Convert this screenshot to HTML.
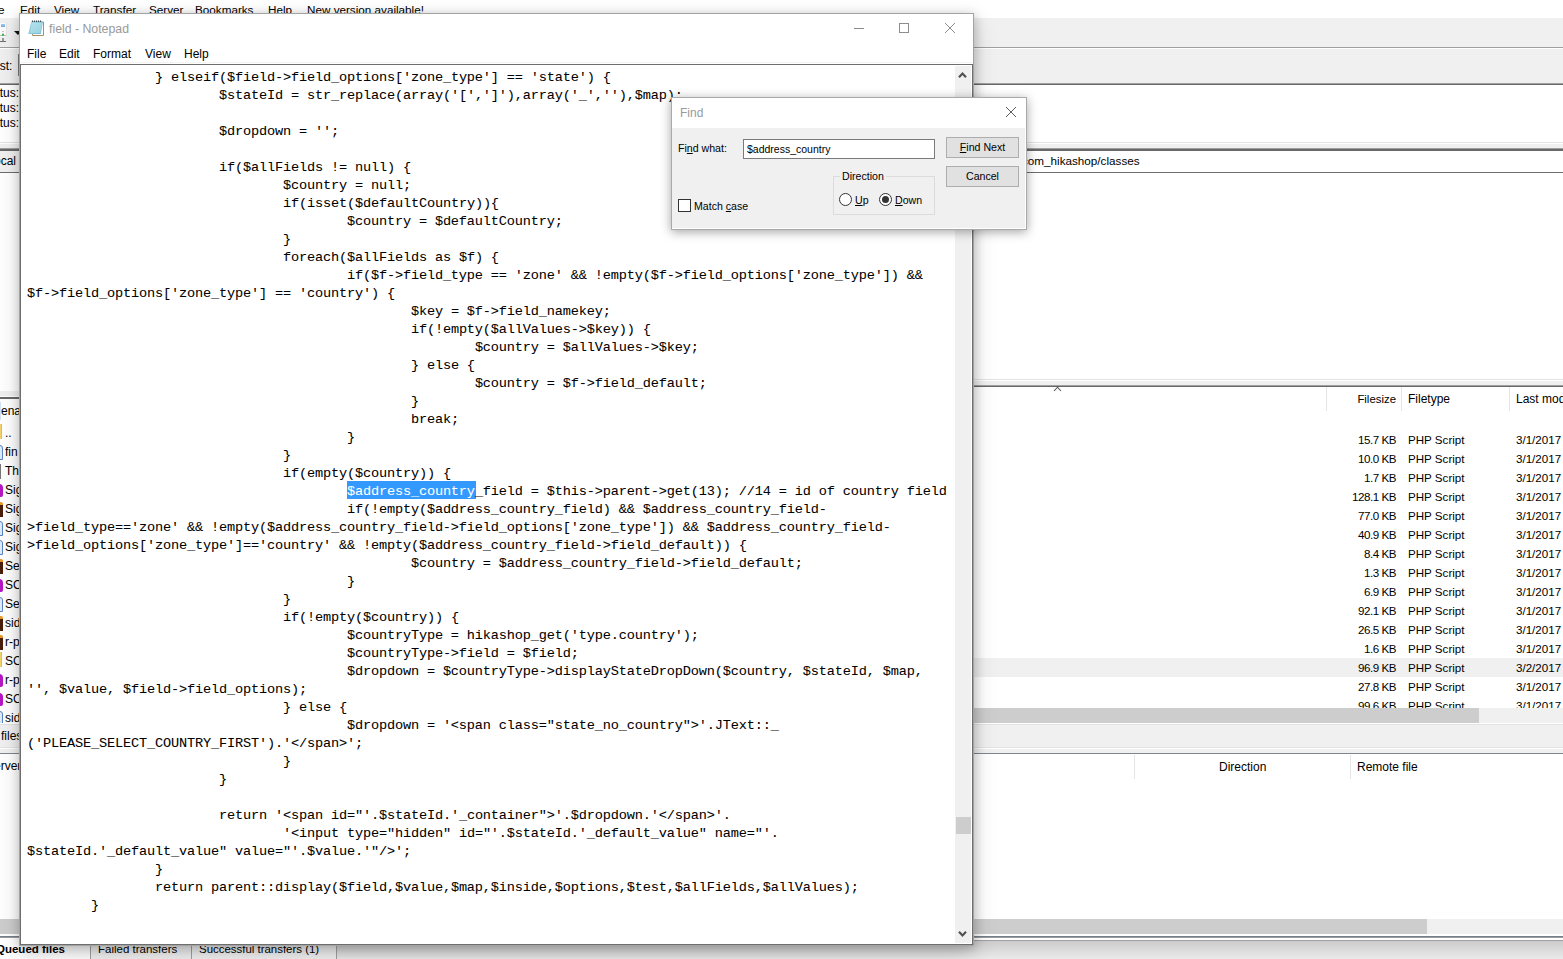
<!DOCTYPE html>
<html lang="en">
<head>
<meta charset="utf-8">
<title>field - Notepad</title>
<style>
html,body{margin:0;padding:0;}
body{width:1563px;height:959px;position:relative;overflow:hidden;background:#fff;
  font-family:"Liberation Sans",sans-serif;font-size:12px;color:#000;}
.abs{position:absolute;}
.t{position:absolute;white-space:pre;line-height:16px;height:16px;}
/* ---------- FileZilla background ---------- */
#fz{position:absolute;left:0;top:0;width:1563px;height:959px;background:#fff;}
.bar{position:absolute;left:0;width:1563px;}
.row{position:absolute;left:973px;width:590px;height:19px;line-height:19px;font-size:11.6px;}
.row.sel{background:#f0f0f0;}
.row span{position:absolute;top:0;white-space:pre;}
.row .sz{right:167px;text-align:right;letter-spacing:-0.45px;}
.row .ty{left:435px;}
.row .dt{left:543px;}
.lrow{position:absolute;left:0;width:20px;height:19px;line-height:19px;font-size:12px;overflow:hidden;}
.lrow span{position:absolute;left:5px;top:0;white-space:pre;}
.ic{position:absolute;left:-12px;top:2px;width:15px;height:15px;box-sizing:border-box;}
.ic.folder{background:#f3d36b;top:-1px;height:16px;left:-13px;border-right:1px solid #e5bd4a;}
.ic.doc{background:#dfeaf8;border:1px solid #5b84c4;border-radius:0 3px 0 0;}
.ic.txt{background:#fff;border:1px solid #777;left:-14px;}
.ic.php{background:#b517c4;border-radius:0 4px 2px 0;top:3px;height:13px;}
.ic.brown{background:#4a1f0a;border-top:3px solid #e79a2e;border-radius:0 2px 0 0;}
/* ---------- Notepad ---------- */
#np{z-index:5;position:absolute;left:19px;top:13px;width:955px;height:933px;box-sizing:border-box;background:#fff;
  border:1px solid #a3a3a3;box-shadow:1px 2px 10px rgba(0,0,0,.20),0 8px 22px rgba(0,0,0,.16);}
#np .title{position:absolute;left:29px;top:7px;font-size:12.3px;color:#999;line-height:16px;white-space:pre;}
#np .menu{position:absolute;top:32px;font-size:12px;line-height:16px;color:#000;white-space:pre;}
#np .mline{position:absolute;left:0;top:48px;width:953px;height:1px;background:#f4f4f4;}
#edit{position:absolute;left:0;top:50px;width:953px;height:881px;box-sizing:border-box;border:1px solid #6e6e6e;background:#fff;overflow:hidden;}
#hlbox{position:absolute;left:326px;top:416px;width:129px;height:18px;background:#3399ff;}
#code{position:absolute;left:6px;top:3.5px;margin:0;font-family:"Liberation Mono","DejaVu Sans Mono",monospace;font-size:13.6px;letter-spacing:-0.16px;line-height:18px;
  white-space:pre;tab-size:8;-moz-tab-size:8;color:#000;-webkit-text-stroke:0.06px #000;}
.hl{color:#fff;-webkit-text-stroke:0.06px #fff;}
#vsb{position:absolute;left:934px;top:1px;width:16px;height:877px;background:#f0f0f0;}
#vsb .thumb{position:absolute;left:0.5px;top:751px;width:15px;height:17px;background:#cdcdcd;}
/* ---------- Find dialog ---------- */
#fd{z-index:6;position:absolute;left:671px;top:97px;width:356px;height:133px;box-sizing:border-box;background:#f0f0f0;
  border:1px solid #a9a9a9;box-shadow:inset -1px -1px 0 #fff,0 2px 10px rgba(0,0,0,.36);font-size:10.6px;}
#fd .tb{position:absolute;left:0;top:0;width:354px;height:30px;background:#fff;}
#fd .t{font-size:10.6px;line-height:14px;height:14px;}
#fd .btn{position:absolute;left:274px;width:73px;height:21px;box-sizing:border-box;border:1px solid #adadad;background:#e1e1e1;
  text-align:center;line-height:19px;font-size:10.6px;white-space:pre;}
#fd .inp{position:absolute;left:71px;top:41px;width:192px;height:20px;box-sizing:border-box;border:1px solid #7a7a7a;background:#fff;}
#fd .grp{position:absolute;left:161px;top:78px;width:102px;height:39px;box-sizing:border-box;border:1px solid #dcdcdc;}
#fd .radio{position:absolute;width:13px;height:13px;box-sizing:border-box;border:1px solid #333;border-radius:50%;background:#fff;}
#fd .radio.on::after{content:"";position:absolute;left:2px;top:2px;width:7px;height:7px;border-radius:50%;background:#333;}
#fd .chk{position:absolute;left:6px;top:101px;width:13px;height:13px;box-sizing:border-box;border:1px solid #333;background:#fff;}
u{text-decoration:underline;}
</style>
</head>
<body>
<div id="fz">
  <!-- menu bar -->
  <div class="t" style="left:-2px;top:2px;font-size:11.7px;">e</div>
  <div class="t" style="left:20px;top:2px;font-size:11.7px;">Edit</div>
  <div class="t" style="left:54px;top:2px;font-size:11.7px;">View</div>
  <div class="t" style="left:93px;top:2px;font-size:11.7px;">Transfer</div>
  <div class="t" style="left:149px;top:2px;font-size:11.7px;">Server</div>
  <div class="t" style="left:195px;top:2px;font-size:11.7px;">Bookmarks</div>
  <div class="t" style="left:268px;top:2px;font-size:11.7px;">Help</div>
  <div class="t" style="left:307px;top:2px;font-size:11.7px;">New version available!</div>
  <!-- toolbar -->
  <div class="bar" style="top:18px;height:29px;background:#f0f0f0;"></div>
  <div class="bar" style="top:47px;height:1px;background:#a0a0a0;"></div>
  <div class="bar" style="top:48px;height:1px;background:#ffffff;"></div>
  <div class="bar" style="top:49px;height:34px;background:#f0f0f0;"></div>
  <div class="bar" style="top:83px;height:1px;background:#a0a0a0;"></div>
  <div class="bar" style="top:84px;height:1px;background:#696969;"></div>
  <!-- toolbar icon remnants -->
  <div class="abs" style="left:0;top:23px;width:6px;height:14px;background:#fbfbfb;border-right:1px solid #e4e4e4;"></div>
  <div class="abs" style="left:1px;top:24px;width:4px;height:3px;background:linear-gradient(#a9cdf3,#6fa5e3);"></div>
  <div class="abs" style="left:2px;top:31px;width:2px;height:1px;background:#c8c8c8;"></div>
  <div class="abs" style="left:2px;top:33px;width:2px;height:1px;background:#d0d0d0;"></div>
  <div class="abs" style="left:0;top:35px;width:6px;height:1px;background:#bdbdbd;"></div>
  <div class="abs" style="left:2px;top:34px;width:2px;height:2px;background:#3cc24a;"></div>
  <div class="abs" style="left:2px;top:38px;width:2px;height:3px;background:#9a9a9a;"></div>
  <div class="abs" style="left:0;top:41px;width:6px;height:1px;background:#707070;"></div>
  <div class="abs" style="left:14px;top:31px;width:0;height:0;border-left:4px solid transparent;border-right:4px solid transparent;border-top:4px solid #111;"></div>
  <!-- quickconnect -->
  <div class="t" style="left:-7px;top:58px;">ost:</div>
  <div class="abs" style="left:18px;top:54px;width:4px;height:22px;border:1px solid #7a7a7a;background:#fff;box-sizing:border-box;"></div>
  <!-- log -->
  <div class="t" style="left:-7px;top:85px;">atus:</div>
  <div class="t" style="left:-7px;top:100px;">atus:</div>
  <div class="t" style="left:-7px;top:115px;">atus:</div>
  <div class="bar" style="top:142px;height:1px;background:#e3e3e3;"></div>
  <div class="bar" style="top:144px;height:4px;background:#f0f0f0;"></div>
  <div class="bar" style="top:148px;height:1px;background:#a0a0a0;"></div>
  <div class="bar" style="top:149px;height:2px;background:#696969;"></div>
  <!-- address bars -->
  <div class="abs" style="left:0;top:151px;width:20px;height:21px;background:#f0f0f0;"></div>
  <div class="t" style="left:-6px;top:153px;">ocal</div>
  <div class="t" style="left:1022px;top:153px;font-size:11.7px;">com_hikashop/classes</div>
  <div class="bar" style="top:172px;height:1px;background:#6d6d6d;"></div>
  <!-- splitter between tree and list -->
  <div class="bar" style="left:960px;top:379px;height:1px;background:#e3e3e3;"></div>
  <div class="bar" style="left:960px;top:381px;height:4px;background:#f0f0f0;"></div>
  <div class="bar" style="left:960px;top:385px;height:1px;background:#a0a0a0;"></div>
  <div class="bar" style="left:960px;top:386px;height:1px;background:#696969;"></div>
  <!-- left local panel remnants -->
  <div class="abs" style="left:0;top:391px;width:22px;height:5px;background:#f0f0f0;"></div>
  <div class="abs" style="left:0;top:397px;width:22px;height:2px;background:#696969;"></div>
  
  <div class="abs" style="left:0;top:402px;width:1px;height:18px;background:#cfe4fb;"></div>
  <div class="t" style="left:1px;top:403px;">ena</div>
<div class="lrow" style="top:424px"><i class="ic folder"></i><span>..</span></div>
<div class="lrow" style="top:443px"><i class="ic doc"></i><span>fin</span></div>
<div class="lrow" style="top:462px"><i class="ic txt"></i><span>Th</span></div>
<div class="lrow" style="top:481px"><i class="ic php"></i><span>Sig</span></div>
<div class="lrow" style="top:500px"><i class="ic brown"></i><span>Sig</span></div>
<div class="lrow" style="top:519px"><i class="ic doc"></i><span>Sig</span></div>
<div class="lrow" style="top:538px"><i class="ic doc"></i><span>Sig</span></div>
<div class="lrow" style="top:557px"><i class="ic brown"></i><span>Sel</span></div>
<div class="lrow" style="top:576px"><i class="ic php"></i><span>SC</span></div>
<div class="lrow" style="top:595px"><i class="ic doc"></i><span>Sel</span></div>
<div class="lrow" style="top:614px"><i class="ic brown"></i><span>sid</span></div>
<div class="lrow" style="top:633px"><i class="ic brown"></i><span>r-p</span></div>
<div class="lrow" style="top:652px"><i class="ic folder"></i><span>SC</span></div>
<div class="lrow" style="top:671px"><i class="ic php"></i><span>r-p</span></div>
<div class="lrow" style="top:690px"><i class="ic php"></i><span>SC</span></div>
<div class="lrow" style="top:709px"><i class="ic doc"></i><span>sid</span></div>

  <div class="abs" style="left:0;top:727px;width:22px;height:20px;background:#f0f0f0;"></div>
  <div class="t" style="left:1px;top:728px;z-index:2;">files</div>
  <div class="t" style="left:-6px;top:758px;z-index:2;">erver</div>
  
  <!-- remote list header -->
  <div class="abs" style="left:1326px;top:387px;width:1px;height:24px;background:#e5e5e5;"></div>
  <div class="abs" style="left:1401px;top:387px;width:1px;height:24px;background:#e5e5e5;"></div>
  <div class="abs" style="left:1509px;top:387px;width:1px;height:24px;background:#e5e5e5;"></div>
  <svg class="abs" style="left:1053px;top:386px" width="10" height="6" viewBox="0 0 10 6"><path d="M1 5 L4.5 1.2 L8 5" fill="none" stroke="#555" stroke-width="1.1"/></svg>
  <div class="t" style="left:1340px;top:391px;width:56px;text-align:right;font-size:11.4px;">Filesize</div>
  <div class="t" style="left:1408px;top:391px;">Filetype</div>
  <div class="t" style="left:1516px;top:391px;">Last mod</div>
<div class="row" style="top:430px"><span class="sz">15.7 KB</span><span class="ty">PHP Script</span><span class="dt">3/1/2017</span></div>
<div class="row" style="top:449px"><span class="sz">10.0 KB</span><span class="ty">PHP Script</span><span class="dt">3/1/2017</span></div>
<div class="row" style="top:468px"><span class="sz">1.7 KB</span><span class="ty">PHP Script</span><span class="dt">3/1/2017</span></div>
<div class="row" style="top:487px"><span class="sz">128.1 KB</span><span class="ty">PHP Script</span><span class="dt">3/1/2017</span></div>
<div class="row" style="top:506px"><span class="sz">77.0 KB</span><span class="ty">PHP Script</span><span class="dt">3/1/2017</span></div>
<div class="row" style="top:525px"><span class="sz">40.9 KB</span><span class="ty">PHP Script</span><span class="dt">3/1/2017</span></div>
<div class="row" style="top:544px"><span class="sz">8.4 KB</span><span class="ty">PHP Script</span><span class="dt">3/1/2017</span></div>
<div class="row" style="top:563px"><span class="sz">1.3 KB</span><span class="ty">PHP Script</span><span class="dt">3/1/2017</span></div>
<div class="row" style="top:582px"><span class="sz">6.9 KB</span><span class="ty">PHP Script</span><span class="dt">3/1/2017</span></div>
<div class="row" style="top:601px"><span class="sz">92.1 KB</span><span class="ty">PHP Script</span><span class="dt">3/1/2017</span></div>
<div class="row" style="top:620px"><span class="sz">26.5 KB</span><span class="ty">PHP Script</span><span class="dt">3/1/2017</span></div>
<div class="row" style="top:639px"><span class="sz">1.6 KB</span><span class="ty">PHP Script</span><span class="dt">3/1/2017</span></div>
<div class="row sel" style="top:658px"><span class="sz">96.9 KB</span><span class="ty">PHP Script</span><span class="dt">3/2/2017</span></div>
<div class="row" style="top:677px"><span class="sz">27.8 KB</span><span class="ty">PHP Script</span><span class="dt">3/1/2017</span></div>
<div class="row" style="top:696px"><span class="sz">99.6 KB</span><span class="ty">PHP Script</span><span class="dt">3/1/2017</span></div>

  <!-- remote h scrollbar -->
  <div class="bar" style="left:960px;top:708px;height:15px;background:#f0f0f0;"></div>
  <div class="abs" style="left:960px;top:708px;width:519px;height:15px;background:#cdcdcd;"></div>
  <div class="bar" style="top:723px;height:1px;background:#fff;"></div>
  <div class="bar" style="top:724px;height:1px;background:#e3e3e3;"></div>
  <div class="bar" style="top:725px;height:22px;background:#f0f0f0;"></div>
  <div class="bar" style="top:747px;height:1px;background:#e3e3e3;"></div>
  <div class="bar" style="top:748px;height:1px;background:#fff;"></div>
  <div class="bar" style="top:749px;height:4px;background:#f0f0f0;"></div>
  <div class="bar" style="top:753px;height:1px;background:#7f8590;"></div>
  <!-- queue header -->
  <div class="abs" style="left:1134px;top:755px;width:1px;height:24px;background:#e5e5e5;"></div>
  <div class="abs" style="left:1350px;top:755px;width:1px;height:24px;background:#e5e5e5;"></div>
  <div class="t" style="left:1219px;top:759px;">Direction</div>
  <div class="t" style="left:1357px;top:759px;">Remote file</div>
  <!-- queue h scrollbar -->
  <div class="bar" style="top:919px;height:15px;background:#f0f0f0;"></div>
  <div class="abs" style="left:0;top:919px;width:1427px;height:15px;background:#cdcdcd;"></div>
  <div class="bar" style="top:934px;height:2px;background:#fff;"></div>
  <div class="bar" style="top:936px;height:1px;background:#75808f;"></div>
  <div class="bar" style="top:937px;height:1px;background:#9c9c9c;"></div>
  <div class="bar" style="top:938px;height:2px;background:#fff;"></div>
  <div class="bar" style="top:940px;height:1px;background:#a0a0a0;"></div>
  <div class="bar" style="top:941px;height:18px;background:linear-gradient(#cccccc,#eaeaea);"></div>
  <!-- bottom tabs -->
  <div class="abs" style="left:0;top:939px;width:91px;height:20px;background:#fff;border-right:1px solid #a0a0a0;box-sizing:border-box;"></div>
  <div class="abs" style="left:91px;top:941px;width:101px;height:18px;background:#f0f0f0;border-right:1px solid #a0a0a0;box-sizing:border-box;"></div>
  <div class="abs" style="left:192px;top:941px;width:145px;height:18px;background:#f0f0f0;border-right:1px solid #a0a0a0;box-sizing:border-box;"></div>
  <div class="t" style="left:-4px;top:941px;font-weight:bold;font-size:11.5px;">Queued files</div>
  <div class="t" style="left:98px;top:941px;font-size:11.5px;">Failed transfers</div>
  <div class="t" style="left:199px;top:941px;font-size:11.45px;">Successful transfers (1)</div>
</div>

<div id="np">
  <svg class="abs" style="left:8px;top:5px" width="17" height="18" viewBox="0 0 17 18">
    <defs><linearGradient id="npg" x1="0" y1="0" x2="1" y2="1"><stop offset="0" stop-color="#a3dae9"/><stop offset="1" stop-color="#6cb9cf"/></linearGradient></defs>
    <path d="M4.5 3 H15.5 V16.5 H4.5 Z" fill="#fff" stroke="#9a8652" stroke-width="0.9"/>
    <path d="M3.2 2.6 H15 L12.8 15 H0.3 Z" fill="url(#npg)"/>
    <path d="M3.6 5H13.8M3.2 7H13.5M2.8 9H13.1M2.4 11H12.8M2 13H12.4" stroke="#cfeef6" stroke-width="0.9"/>
    <path d="M4.5 1.4V3M6.5 1.4V3M8.5 1.4V3M10.5 1.4V3M12.5 1.4V3" stroke="#3f4a50" stroke-width="1.1"/>
  </svg>
  <div class="title">field - Notepad</div>
  <svg class="abs" style="left:834px;top:9px" width="11" height="11"><path d="M0 5.5H10" stroke="#8c8c8c" stroke-width="1"/></svg>
  <svg class="abs" style="left:879px;top:9px" width="11" height="11"><rect x="0.5" y="0.5" width="9" height="9" fill="none" stroke="#8c8c8c" stroke-width="1"/></svg>
  <svg class="abs" style="left:925px;top:9px" width="11" height="11"><path d="M0 0L10 10M10 0L0 10" stroke="#8c8c8c" stroke-width="1"/></svg>
  <div class="menu" style="left:7px;">File</div>
  <div class="menu" style="left:39px;">Edit</div>
  <div class="menu" style="left:73px;">Format</div>
  <div class="menu" style="left:125px;">View</div>
  <div class="menu" style="left:164px;">Help</div>
  <div class="mline"></div>
  <div id="edit"><div id="hlbox"></div><pre id="code">		} elseif($field-&gt;field_options['zone_type'] == 'state') {
			$stateId = str_replace(array('[',']'),array('_',''),$map);

			$dropdown = '';

			if($allFields != null) {
				$country = null;
				if(isset($defaultCountry)){
					$country = $defaultCountry;
				}
				foreach($allFields as $f) {
					if($f-&gt;field_type == 'zone' &amp;&amp; !empty($f-&gt;field_options['zone_type']) &amp;&amp;
$f-&gt;field_options['zone_type'] == 'country') {
						$key = $f-&gt;field_namekey;
						if(!empty($allValues-&gt;$key)) {
							$country = $allValues-&gt;$key;
						} else {
							$country = $f-&gt;field_default;
						}
						break;
					}
				}
				if(empty($country)) {
					<span class="hl">$address_country</span>_field = $this-&gt;parent-&gt;get(13); //14 = id of country field
					if(!empty($address_country_field) &amp;&amp; $address_country_field-
&gt;field_type=='zone' &amp;&amp; !empty($address_country_field-&gt;field_options['zone_type']) &amp;&amp; $address_country_field-
&gt;field_options['zone_type']=='country' &amp;&amp; !empty($address_country_field-&gt;field_default)) {
						$country = $address_country_field-&gt;field_default;
					}
				}
				if(!empty($country)) {
					$countryType = hikashop_get('type.country');
					$countryType-&gt;field = $field;
					$dropdown = $countryType-&gt;displayStateDropDown($country, $stateId, $map,
'', $value, $field-&gt;field_options);
				} else {
					$dropdown = '&lt;span class="state_no_country"&gt;'.JText::_
('PLEASE_SELECT_COUNTRY_FIRST').'&lt;/span&gt;';
				}
			}

			return '&lt;span id="'.$stateId.'_container"&gt;'.$dropdown.'&lt;/span&gt;'.
				'&lt;input type="hidden" id="'.$stateId.'_default_value" name="'.
$stateId.'_default_value" value="'.$value.'"/&gt;';
		}
		return parent::display($field,$value,$map,$inside,$options,$test,$allFields,$allValues);
	}</pre>
  <div id="vsb">
    <svg class="abs" style="left:3px;top:5px" width="9" height="8" viewBox="0 0 9 8"><path d="M1 6.3L4.5 2.5L8 6.3" fill="none" stroke="#505050" stroke-width="2.1"/></svg>
    <div class="thumb"></div>
    <svg class="abs" style="left:3px;top:864px" width="9" height="8" viewBox="0 0 9 8"><path d="M1 1.7L4.5 5.5L8 1.7" fill="none" stroke="#505050" stroke-width="2.1"/></svg>
  </div></div>
</div>

<div id="fd">
  <div class="tb"></div>
  <div class="t" style="left:8px;top:7px;font-size:12px;line-height:16px;height:16px;color:#999;">Find</div>
  <svg class="abs" style="left:334px;top:9px" width="11" height="11"><path d="M0 0L10 10M10 0L0 10" stroke="#5e5e5e" stroke-width="1"/></svg>
  <div class="t" style="left:6px;top:43px;">Fi<u>n</u>d what:</div>
  <div class="inp"><div class="t" style="left:3px;top:2px;font-size:10.5px;">$address_country</div></div>
  <div class="btn" style="top:39px;"><u>F</u>ind Next</div>
  <div class="btn" style="top:68px;">Cancel</div>
  <div class="grp"></div>
  <div class="t" style="left:168px;top:71px;background:#f0f0f0;padding:0 2px;">Direction</div>
  <div class="radio" style="left:167px;top:95px;"></div>
  <div class="t" style="left:183px;top:95px;"><u>U</u>p</div>
  <div class="radio on" style="left:207px;top:95px;"></div>
  <div class="t" style="left:223px;top:95px;"><u>D</u>own</div>
  <div class="chk"></div>
  <div class="t" style="left:22px;top:101px;">Match <u>c</u>ase</div>
</div>
</body>
</html>
